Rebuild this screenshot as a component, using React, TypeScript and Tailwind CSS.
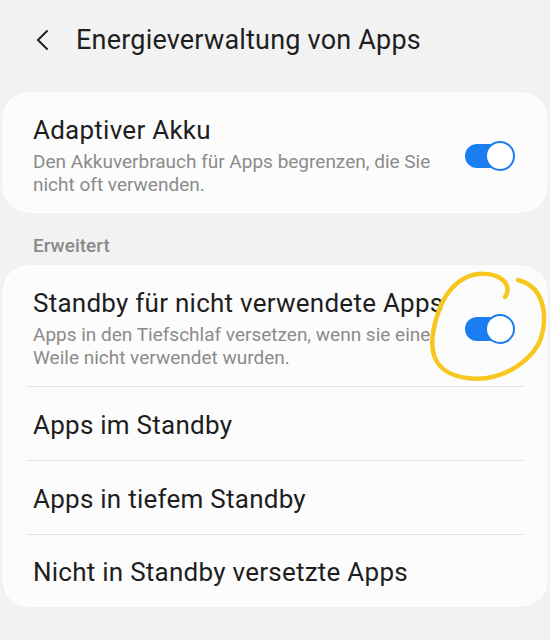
import React from 'react';

// Samsung-style settings page: "Energieverwaltung von Apps"

function Toggle() {
  return (
    <div className="relative w-[50px] h-[30px] shrink-0">
      <div className="absolute left-0 top-[3px] h-[24px] w-[44px] rounded-full bg-[#1a7df2]" />
      <div className="absolute right-0 top-0 w-[30px] h-[30px] rounded-full bg-white border-2 border-[#1a7df2]" />
    </div>
  );
}

function ToggleRow({ title, lines }: { title: string; lines: string[] }) {
  return (
    <div className="flex items-center pl-[31px] pr-[33px] pt-[23px] pb-[17px]">
      <div className="w-[410px] overflow-hidden">
        <div className="text-[26px] leading-[30px] tracking-[0.25px] text-[#1e1e1e] whitespace-nowrap">{title}</div>
        <div className="mt-[5px]">
          {lines.map((l) => (
            <div key={l} className="text-[19px] leading-[23px] text-[#8b8b8b] whitespace-nowrap">
              {l}
            </div>
          ))}
        </div>
      </div>
      <div className="flex-1" />
      <Toggle />
    </div>
  );
}

const links = ['Apps im Standby', 'Apps in tiefem Standby', 'Nicht in Standby versetzte Apps'];

export default function App() {
  return (
    <div className="relative min-h-[640px] bg-[#f2f2f2] font-['Roboto',sans-serif] overflow-hidden">
      <div className="h-[92px] flex items-start pt-[24px] pl-[35px]">
        <svg width="14" height="32" viewBox="0 0 14 32" className="shrink-0">
          <path d="M12 7 L3 16 L12 25" fill="none" stroke="#222" strokeWidth="2" strokeLinecap="round" strokeLinejoin="round" />
        </svg>
        <h1 className="ml-[27px] text-[27px] leading-[32px] tracking-[0.2px] text-[#1e1e1e]">Energieverwaltung von Apps</h1>
      </div>

      <div className="px-[2px]">
        <div className="bg-[#fcfcfc] rounded-[26px] shadow-[0_0_1px_rgba(0,0,0,0.1)]">
          <ToggleRow
            title="Adaptiver Akku"
            lines={['Den Akkuverbrauch für Apps begrenzen, die Sie', 'nicht oft verwenden.']}
          />
        </div>

        <div className="pl-[31px] mt-[22px] mb-[8px] text-[19px] leading-[22px] font-medium text-[#8a8a8a]">
          Erweitert
        </div>

        <div className="bg-[#fcfcfc] rounded-[26px] shadow-[0_0_1px_rgba(0,0,0,0.1)]">
          <ToggleRow
            title="Standby für nicht verwendete Apps"
            lines={['Apps in den Tiefschlaf versetzen, wenn sie eine', 'Weile nicht verwendet wurden.']}
          />
          {links.map((t, i) => (
            <div key={t}>
              <div className="mx-[24px] h-px bg-[#e4e4e4]" />
              <div
                className={`flex items-center pl-[31px] pt-[3px] text-[26px] tracking-[0.25px] text-[#1e1e1e] ${
                  i === links.length - 1 ? 'h-[72px]' : 'h-[73px]'
                }`}
              >
                {t}
              </div>
            </div>
          ))}
        </div>
      </div>

      {/* hand-drawn yellow annotation */}
      <svg className="absolute left-0 top-0 pointer-events-none" width="550" height="640" viewBox="0 0 550 640">
        <path
          d="M505 297 C510 290 507 282 500 278 C492 273 477 272 465 278 C452 285 443 298 438 313 C433 328 430 346 435 358 C440 370 452 376 467 378 C482 380 498 377 511 370 C525 362 536 352 541 338 C546 323 545 306 538 294 C533 286 526 282 518 280"
          fill="none"
          stroke="#f7c71f"
          strokeWidth="4.5"
          strokeLinecap="round"
        />
      </svg>
    </div>
  );
}
